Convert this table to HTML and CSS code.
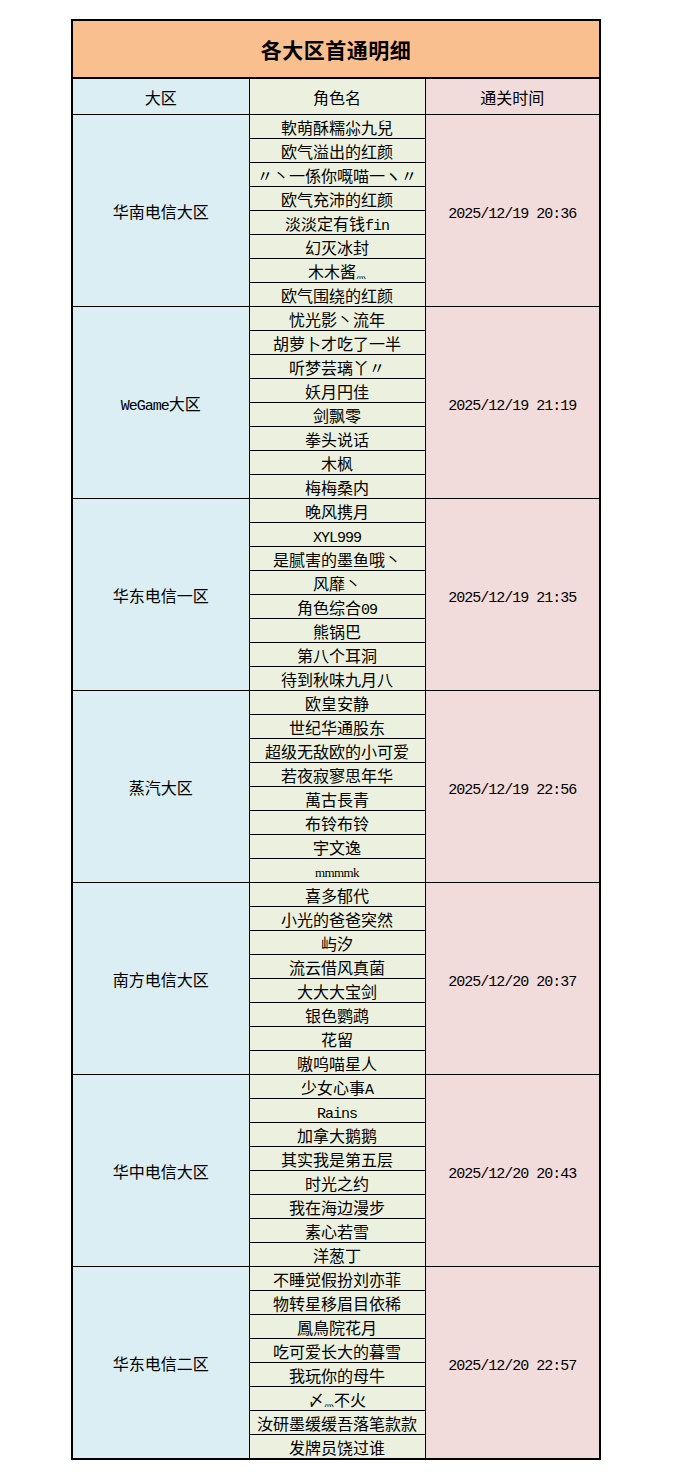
FILE: index.html
```html
<!DOCTYPE html>
<html lang="zh-CN">
<head>
<meta charset="utf-8">
<title>各大区首通明细</title>
<link rel="stylesheet" href="styles.css">
</head>
<body>
<table class="sheet">
  <colgroup>
    <col class="c1"><col class="c2"><col class="c3">
  </colgroup>
  <thead>
    <tr class="title-row"><th colspan="3" class="title">各大区首通明细</th></tr>
    <tr class="head-row">
      <th class="zone">大区</th>
      <th class="name">角色名</th>
      <th class="time">通关时间</th>
    </tr>
  </thead>
  <tbody>
    <tr><td class="zone" rowspan="8">华南电信大区</td><td class="name">軟萌酥糯尛九兒</td><td class="time" rowspan="8"><span class="lat">2025/12/19 20:36</span></td></tr>
    <tr><td class="name">欧气溢出的红颜</td></tr>
    <tr><td class="name">〃丶一係你嘅喵一ヽ〃</td></tr>
    <tr><td class="name">欧气充沛的红颜</td></tr>
    <tr><td class="name">淡淡定有钱<span class="lat">fin</span></td></tr>
    <tr><td class="name">幻灭冰封</td></tr>
    <tr><td class="name">木木酱<span class="dots">灬</span></td></tr>
    <tr><td class="name">欧气围绕的红颜</td></tr>

    <tr><td class="zone" rowspan="8"><span class="lat">WeGame</span>大区</td><td class="name">忧光影丶流年</td><td class="time" rowspan="8"><span class="lat">2025/12/19 21:19</span></td></tr>
    <tr><td class="name">胡萝卜才吃了一半</td></tr>
    <tr><td class="name">听梦芸璃丫〃</td></tr>
    <tr><td class="name">妖月円佳</td></tr>
    <tr><td class="name">剑飘零</td></tr>
    <tr><td class="name">拳头说话</td></tr>
    <tr><td class="name">木枫</td></tr>
    <tr><td class="name">梅梅桑内</td></tr>

    <tr><td class="zone" rowspan="8">华东电信一区</td><td class="name">晚风携月</td><td class="time" rowspan="8"><span class="lat">2025/12/19 21:35</span></td></tr>
    <tr><td class="name"><span class="lat">XYL999</span></td></tr>
    <tr><td class="name">是腻害的墨鱼哦丶</td></tr>
    <tr><td class="name">风靡丶</td></tr>
    <tr><td class="name">角色综合<span class="lat">09</span></td></tr>
    <tr><td class="name">熊锅巴</td></tr>
    <tr><td class="name">第八个耳洞</td></tr>
    <tr><td class="name">待到秋味九月八</td></tr>

    <tr><td class="zone" rowspan="8">蒸汽大区</td><td class="name">欧皇安静</td><td class="time" rowspan="8"><span class="lat">2025/12/19 22:56</span></td></tr>
    <tr><td class="name">世纪华通股东</td></tr>
    <tr><td class="name">超级无敌欧的小可爱</td></tr>
    <tr><td class="name">若夜寂寥思年华</td></tr>
    <tr><td class="name">萬古長青</td></tr>
    <tr><td class="name">布铃布铃</td></tr>
    <tr><td class="name">宇文逸</td></tr>
    <tr><td class="name"><span class="small">mmmmk</span></td></tr>

    <tr><td class="zone" rowspan="8">南方电信大区</td><td class="name">喜多郁代</td><td class="time" rowspan="8"><span class="lat">2025/12/20 20:37</span></td></tr>
    <tr><td class="name">小光的爸爸突然</td></tr>
    <tr><td class="name">屿汐</td></tr>
    <tr><td class="name">流云借风真菌</td></tr>
    <tr><td class="name">大大大宝剑</td></tr>
    <tr><td class="name">银色鹦鹉</td></tr>
    <tr><td class="name">花留</td></tr>
    <tr><td class="name">嗷呜喵星人</td></tr>

    <tr><td class="zone" rowspan="8">华中电信大区</td><td class="name">少女心事<span class="lat">A</span></td><td class="time" rowspan="8"><span class="lat">2025/12/20 20:43</span></td></tr>
    <tr><td class="name"><span class="lat">Rains</span></td></tr>
    <tr><td class="name">加拿大鹅鹅</td></tr>
    <tr><td class="name">其实我是第五层</td></tr>
    <tr><td class="name">时光之约</td></tr>
    <tr><td class="name">我在海边漫步</td></tr>
    <tr><td class="name">素心若雪</td></tr>
    <tr><td class="name">洋葱丁</td></tr>

    <tr><td class="zone" rowspan="8">华东电信二区</td><td class="name">不睡觉假扮刘亦菲</td><td class="time" rowspan="8"><span class="lat">2025/12/20 22:57</span></td></tr>
    <tr><td class="name">物转星移眉目依稀</td></tr>
    <tr><td class="name">鳳鳥院花月</td></tr>
    <tr><td class="name">吃可爱长大的暮雪</td></tr>
    <tr><td class="name">我玩你的母牛</td></tr>
    <tr><td class="name">〆<span class="dots">灬</span>不火</td></tr>
    <tr><td class="name">汝研墨缓缓吾落笔款款</td></tr>
    <tr><td class="name">发牌员饶过谁</td></tr>
  </tbody>
</table>
</body>
</html>
```
FILE: styles.css
```css
html, body {
  margin: 0;
  padding: 0;
  background: #ffffff;
}

body {
  padding: 19px 0 0 71px;
  font-family: "Noto Sans CJK SC", "Noto Sans", sans-serif;
  color: #000000;
}

.sheet {
  border-collapse: collapse;
  table-layout: fixed;
  width: 528px;
  border: 2px solid #000;
}

.c1 { width: 177px; }
.c2 { width: 176px; }
.c3 { width: 175px; }

.sheet th,
.sheet td {
  border: 1px solid #000;
  padding: 0;
  text-align: center;
  vertical-align: middle;
  font-size: 16px;
  font-weight: 400;
  line-height: 22px;
  white-space: nowrap;
  overflow: hidden;
}

.title-row th.title {
  background: #fabf8f;
  height: 56px;
  font-size: 21px;
  font-weight: 700;
  letter-spacing: 0.5px;
  border-bottom: 2px solid #000;
}

.head-row th {
  height: 35px;
}

.sheet tbody td {
  height: 23px;
  max-height: 23px;
}

.zone { background: #daeef3; }
.name { background: #ebf1de; }
.time { background: #f2dcdb; }

.lat {
  font-family: "Liberation Mono", "DejaVu Sans Mono", monospace;
  font-size: 15px;
  letter-spacing: -1px;
  line-height: 1;
}

.small {
  font-family: "Liberation Serif", serif;
  font-size: 13px;
  letter-spacing: -0.6px;
  line-height: 1;
  vertical-align: 1px;
}

.dots {
  font-size: 10px;
  line-height: 1;
}
```
